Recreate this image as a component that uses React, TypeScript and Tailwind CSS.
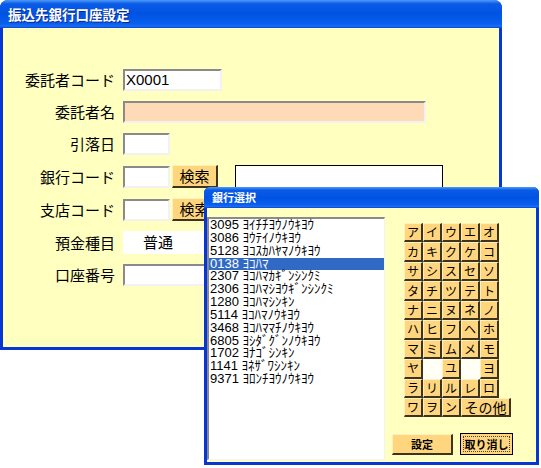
import React from "react";

const items: string[] = [
  "3095 ﾖｲﾁﾁﾖｳﾉｳｷﾖｳ",
  "3086 ﾖｳﾃｲﾉｳｷﾖｳ",
  "5128 ﾖｺｽｶﾊﾔﾏﾉｳｷﾖｳ",
  "0138 ﾖｺﾊﾏ",
  "2307 ﾖｺﾊﾏｶｷﾞﾝｼﾝｸﾐ",
  "2306 ﾖｺﾊﾏｼﾖｳｷﾞﾝｼﾝｸﾐ",
  "1280 ﾖｺﾊﾏｼﾝｷﾝ",
  "5114 ﾖｺﾊﾏﾉｳｷﾖｳ",
  "3468 ﾖｺﾊﾏﾏﾁﾉｳｷﾖｳ",
  "6805 ﾖｼﾀﾞｸﾞﾝﾉｳｷﾖｳ",
  "1702 ﾖﾅｺﾞｼﾝｷﾝ",
  "1141 ﾖﾈｻﾞﾜｼﾝｷﾝ",
  "9371 ﾖﾛﾝﾁﾖｳﾉｳｷﾖｳ",
];

const kana: string[] = [
  "ア", "イ", "ウ", "エ", "オ",
  "カ", "キ", "ク", "ケ", "コ",
  "サ", "シ", "ス", "セ", "ソ",
  "タ", "チ", "ツ", "テ", "ト",
  "ナ", "ニ", "ヌ", "ネ", "ノ",
  "ハ", "ヒ", "フ", "ヘ", "ホ",
  "マ", "ミ", "ム", "メ", "モ",
  "ヤ", "", "ユ", "", "ヨ",
  "ラ", "リ", "ル", "レ", "ロ",
];

function Label({ children }: { children: React.ReactNode }) {
  return (
    <div className="w-[112px] shrink-0 text-right text-[15px] leading-[22px] text-black">
      {children}
    </div>
  );
}

function Sunken({ w, bg = "bg-white", children }: { w: string; bg?: string; children?: React.ReactNode }) {
  return (
    <div
      className={`${w} ${bg} h-[22px] border-2 border-t-[#8a8a8a] border-l-[#8a8a8a] border-b-[#f2f2f2] border-r-[#f2f2f2] flex items-center pl-[1px] text-[15px] font-['Liberation_Sans',sans-serif] text-black`}
    >
      {children}
    </div>
  );
}

function SearchBtn() {
  return (
    <div className="ml-[2px] w-[46px] h-[23px] bg-[#ffd67e] border-t border-l border-t-[#fff0c0] border-l-[#fff0c0] border-r-2 border-b-2 border-r-[#3c3420] border-b-[#3c3420] flex items-center justify-center text-[15px] text-black">
      検索
    </div>
  );
}

export default function App() {
  return (
    <div className="relative w-[541px] h-[468px] bg-white overflow-hidden font-['Noto_Sans_CJK_JP',sans-serif]">
      {/* Main window */}
      <div className="absolute left-0 top-0 w-[502px] h-[350px] flex flex-col rounded-t-[8px] overflow-hidden bg-[#0836d4]">
        <div className="h-[28px] shrink-0 flex items-center pl-[8px] bg-[linear-gradient(180deg,#4d9bf8_0%,#0a5ae6_14%,#0053e2_50%,#0a5fee_86%,#1a6ef8_93%,#0a44cc_100%)] text-white font-bold text-[13.5px] [text-shadow:1px_1px_0_#0a2a8a]">
          振込先銀行口座設定
        </div>
        <div className="flex-1 mx-[3px] mb-[3px] bg-[#ffffc0] pt-[41px] flex flex-col gap-[10px]">
          <div className="flex items-center">
            <Label>委託者コード</Label>
            <div className="ml-[8px]">
              <Sunken w="w-[99px]">X0001</Sunken>
            </div>
          </div>
          <div className="flex items-center">
            <Label>委託者名</Label>
            <div className="ml-[8px]">
              <Sunken w="w-[303px]" bg="bg-[#ffdab9]" />
            </div>
          </div>
          <div className="flex items-center">
            <Label>引落日</Label>
            <div className="ml-[8px]">
              <Sunken w="w-[47px]" />
            </div>
          </div>
          <div className="flex items-center">
            <Label>銀行コード</Label>
            <div className="ml-[8px] flex items-center">
              <Sunken w="w-[47px]" />
              <SearchBtn />
              <div className="ml-[17px] w-[208px] h-[23px] bg-white border border-black" />
            </div>
          </div>
          <div className="flex items-center">
            <Label>支店コード</Label>
            <div className="ml-[8px] flex items-center">
              <Sunken w="w-[47px]" />
              <SearchBtn />
            </div>
          </div>
          <div className="flex items-center">
            <Label>預金種目</Label>
            <div className="ml-[8px] w-[110px] h-[23px] bg-white flex items-center pl-[20px] text-[15px] text-black">
              普通
            </div>
          </div>
          <div className="flex items-center">
            <Label>口座番号</Label>
            <div className="ml-[8px]">
              <Sunken w="w-[140px]" />
            </div>
          </div>
        </div>
      </div>

      {/* Bank selection dialog */}
      <div className="absolute left-[204px] top-[187px] w-[335px] h-[278px] flex flex-col rounded-t-[6px] overflow-hidden bg-[#0836d4]">
        <div className="h-[21px] shrink-0 flex items-center pl-[8px] bg-[linear-gradient(180deg,#4d9bf8_0%,#0a5ae6_15%,#0053e2_50%,#0a5fee_85%,#1a6ef8_92%,#0a44cc_100%)] text-white font-bold text-[11px]">
          銀行選択
        </div>
        <div className="flex-1 mx-[3px] mb-[3px] bg-[#ffffc0] flex">
          <div className="mt-[9px] mb-[2px] w-[178px] bg-white border-t-2 border-l-2 border-t-[#8a8a8a] border-l-[#8a8a8a] border-b border-r border-b-[#f2f2f2] border-r-[#f2f2f2] flex flex-col font-['Liberation_Sans','Noto_Sans_CJK_JP',sans-serif] text-[13px] leading-[12.85px] text-black">
            {items.map((it, i) => (
              <div
                key={i}
                className={`pl-[1px] h-[12.85px] whitespace-nowrap ${i === 3 ? "bg-[#316ac5] text-white" : ""}`}
              >
                {it}
              </div>
            ))}
          </div>
          <div className="flex-1 flex flex-col">
            <div className="pt-[15px] pl-[19px]">
              <div className="grid grid-cols-[repeat(5,19px)] auto-rows-[19.45px]">
                {kana.map((k, i) =>
                  k === "" ? (
                    <div key={i} className="bg-[#fffff6]" />
                  ) : (
                    <div
                      key={i}
                      className="bg-[#ffd67e] border-t border-l border-t-[#fff0c0] border-l-[#fff0c0] border-r-2 border-b-2 border-r-[#3c3420] border-b-[#3c3420] flex items-center justify-center text-[12px] text-black"
                    >
                      {k}
                    </div>
                  )
                )}
                {["ワ", "ヲ", "ン"].map((k) => (
                  <div
                    key={k}
                    className="bg-[#ffd67e] border-t border-l border-t-[#fff0c0] border-l-[#fff0c0] border-r-2 border-b-2 border-r-[#3c3420] border-b-[#3c3420] flex items-center justify-center text-[12px] text-black"
                  >
                    {k}
                  </div>
                ))}
                <div className="col-span-2 w-[50px] bg-[#ffd67e] border-t border-l border-t-[#fff0c0] border-l-[#fff0c0] border-r-2 border-b-2 border-r-[#3c3420] border-b-[#3c3420] flex items-center justify-center text-[14px] text-black">
                  その他
                </div>
              </div>
            </div>
            <div className="mt-auto mb-[7px] pl-[7px] flex items-end gap-[7px]">
              <div className="w-[61px] h-[21px] bg-[#ffd67e] border-t border-l border-t-[#fff0c0] border-l-[#fff0c0] border-r-2 border-b-2 border-r-[#3c3420] border-b-[#3c3420] flex items-center justify-center text-[11px] font-bold text-black">
                設定
              </div>
              <div className="w-[53px] h-[22px] border border-black bg-[#ffd67e] p-[2px] flex">
                <div className="flex-1 border border-dotted border-[#444] flex items-center justify-center text-[11px] font-bold text-black">
                  取り消し
                </div>
              </div>
            </div>
          </div>
        </div>
      </div>
    </div>
  );
}
